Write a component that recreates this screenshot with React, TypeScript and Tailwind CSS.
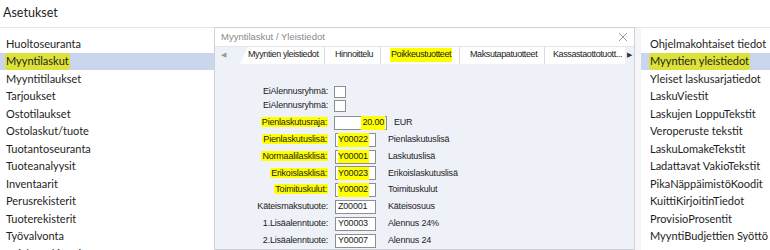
export default function App() {
  const leftItems = [
    "Huoltoseuranta",
    "Myyntilaskut",
    "Myyntitilaukset",
    "Tarjoukset",
    "Ostotilaukset",
    "Ostolaskut/tuote",
    "Tuotantoseuranta",
    "Tuoteanalyysit",
    "Inventaarit",
    "Perusrekisterit",
    "Tuoterekisterit",
    "Työvalvonta",
    "Asiakasrekisteri",
  ];

  const rightItems = [
    "Ohjelmakohtaiset tiedot",
    "Myyntien yleistiedot",
    "Yleiset laskusarjatiedot",
    "LaskuViestit",
    "Laskujen LoppuTekstit",
    "Veroperuste tekstit",
    "LaskuLomakeTekstit",
    "Ladattavat VakioTekstit",
    "PikaNäppäimistöKoodit",
    "KuittiKirjoitinTiedot",
    "ProvisioProsentit",
    "MyyntiBudjettien Syöttö",
  ];

  const rows = [
    { label: "Pienlaskutuslisä:", value: "Y00022", desc: "Pienlaskutuslisä", hl: true },
    { label: "Normaalilasklisä:", value: "Y00001", desc: "Laskutuslisä", hl: true },
    { label: "Erikoislasklisä:", value: "Y00023", desc: "Erikoislaskutuslisä", hl: true },
    { label: "Toimituskulut:", value: "Y00002", desc: "Toimituskulut", hl: true },
    { label: "Käteismaksutuote:", value: "Z00001", desc: "Käteisosuus", hl: false },
    { label: "1.Lisäalenntuote:", value: "Y00003", desc: "Alennus 24%", hl: false },
    { label: "2.Lisäalenntuote:", value: "Y00007", desc: "Alennus 24", hl: false },
  ];

  const tabs = [
    { name: "Myyntien yleistiedot", cls: "w-[77px] pl-0", hl: false },
    { name: "Hinnoittelu", cls: "w-[56px] pl-[10px]", hl: false },
    { name: "Poikkeustuotteet", cls: "w-[79px] pl-[9px]", hl: true },
    { name: "Maksutapatuotteet", cls: "w-[85px] pl-[10px]", hl: false },
    { name: "Kassastaottotuott...", cls: "flex-1 pl-[8px]", hl: false },
  ];

  return (
    <div className="w-[770px] h-[250px] overflow-hidden bg-white text-[#1e1e1e] font-['Lato','Liberation_Sans',sans-serif]">
      <div className="h-[28px] flex items-center pl-[3px] text-[12.5px] border-b border-[#e6e6e6]">
        Asetukset
      </div>

      <div className="flex h-[222px]">
        {/* left list */}
        <div className="w-[214px] shrink-0 pt-[7px]">
          {leftItems.map((item, i) => (
            <div
              key={item}
              className={`h-[17.5px] flex items-center pl-[6px] text-[11px] ${i === 1 ? "bg-[#ccd5ee]" : ""}`}
            >
              {i === 1 ? (
                <span className="bg-[#dce23a] rounded-[3px] -ml-[1px] px-[1px]">{item}</span>
              ) : (
                item
              )}
            </div>
          ))}
        </div>

        {/* dialog */}
        <div className="w-[421px] shrink-0 -mt-[1px] border border-[#cfd2da] bg-[#eff1f9] flex flex-col font-['Liberation_Sans',Arial,sans-serif]">
          <div className="h-[19px] bg-white flex items-center justify-between pl-[6px] pr-[6px] text-[9.5px] text-[#8a8a8a] border-b border-[#e3e5ec]">
            <span>Myyntilaskut / Yleistiedot</span>
            <svg width="10" height="10" viewBox="0 0 10 10">
              <path d="M1 1 L9 9 M9 1 L1 9" stroke="#9a9a9a" strokeWidth="1" />
            </svg>
          </div>

          <div className="h-[17px] flex items-stretch">
            <div className="w-[25px] flex items-center pl-[6px] text-[7px] text-[#9a9a9a]">◀</div>
            <div className="w-[8px] bg-white [clip-path:polygon(100%_0,100%_100%,0_100%)]" />
            <div className="w-[377px] bg-white flex items-stretch text-[9px] tracking-[-0.4px] text-[#222]">
              {tabs.map((t, i) => (
                <div
                  key={t.name}
                  className={`${t.cls} flex items-center ${i < tabs.length - 1 ? "border-r border-[#d9dbe2]" : ""} whitespace-nowrap overflow-hidden`}
                >
                  {t.hl ? <span className="bg-[#ffff00] px-[1px]">{t.name}</span> : t.name}
                </div>
              ))}
            </div>
            <div className="flex-1 flex items-center justify-center text-[7px] text-[#333]">▶</div>
          </div>

          <div className="pt-[21px] flex flex-col text-[9px] tracking-[-0.2px] text-[#222]">
            {[0, 1].map((k) => (
              <div key={k} className="h-[14px] flex items-center">
                <div className="w-[113px] text-right">EiAlennusryhmä:</div>
                <div className="ml-[6px] w-[12px] h-[12px] bg-white border border-[#8e8e8e]" />
              </div>
            ))}

            <div className="mt-[2px] h-[16.8px] flex items-center">
              <div className="w-[113px] text-right">
                <span className="bg-[#ffff00] rounded-[2px] px-[1px]">Pienlaskutusraja:</span>
              </div>
              <div className="ml-[6px] w-[53px] h-[14px] bg-white border border-[#8e8e8e] flex items-center justify-end pr-[1px]">
                <span className="bg-[#ffff00] px-[1px]">20.00</span>
              </div>
              <div className="ml-[7px]">EUR</div>
            </div>

            {rows.map((r) => (
              <div key={r.label} className="h-[16.8px] flex items-center">
                <div className="w-[113px] text-right">
                  {r.hl ? <span className="bg-[#ffff00] rounded-[2px] px-[1px]">{r.label}</span> : r.label}
                </div>
                <div className="ml-[7px] w-[41px] h-[14px] bg-white border border-[#8e8e8e] flex items-center pl-[2px]">
                  {r.hl ? <span className="bg-[#ffff00] pr-[1px]">{r.value}</span> : r.value}
                </div>
                <div className="ml-[12px]">{r.desc}</div>
              </div>
            ))}
          </div>
        </div>

        {/* gutter */}
        <div className="w-[6px] shrink-0 bg-[#f6f6f8]" />

        {/* right list */}
        <div className="flex-1 min-w-0 pt-[7px]">
          {rightItems.map((item, i) => (
            <div
              key={item}
              className={`h-[17.5px] flex items-center pl-[9px] text-[11px] whitespace-nowrap ${i === 1 ? "bg-[#ccd5ee]" : ""}`}
            >
              {i === 1 ? (
                <span className="bg-[#dce23a] rounded-[3px] -ml-[1px] px-[1px]">{item}</span>
              ) : (
                item
              )}
            </div>
          ))}
        </div>
      </div>
    </div>
  );
}
